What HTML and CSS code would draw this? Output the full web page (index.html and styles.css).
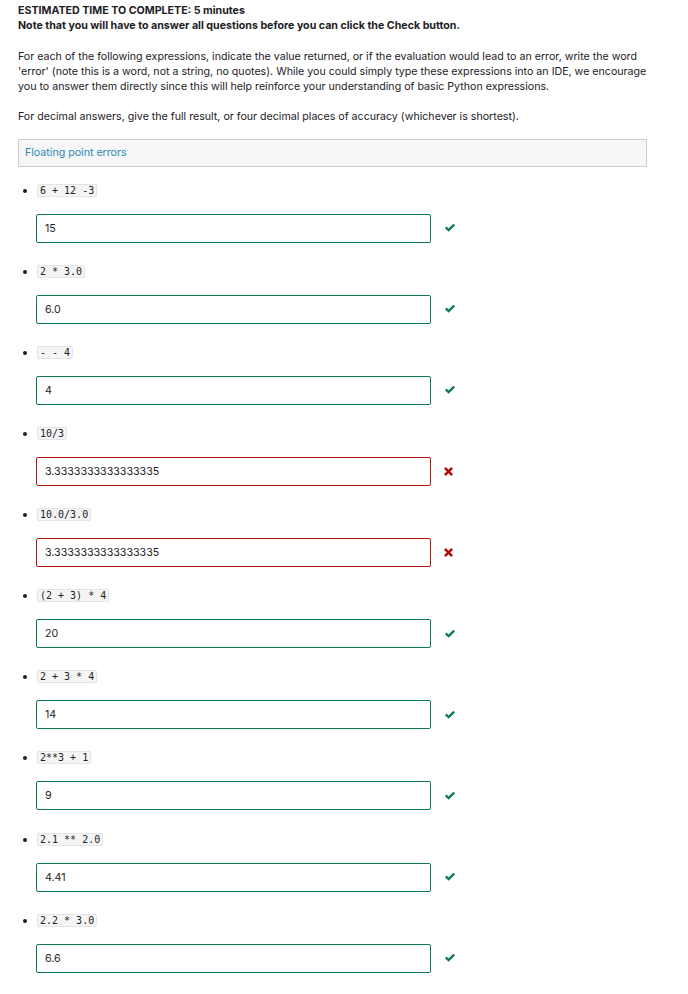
FILE: index.html
```html
<!DOCTYPE html>
<html>
<head>
<meta charset="utf-8">
<link rel="stylesheet" href="styles.css">
</head>
<body>
<div class="page">
  <p class="intro"><strong>ESTIMATED TIME TO COMPLETE: 5 minutes</strong><br><strong>Note that you will have to answer all questions before you can click the Check button.</strong></p>
  <p class="para">For each of the following expressions, indicate the value returned, or if the evaluation would lead to an error, write the word 'error' (note this is a word, not a string, no quotes). While you could simply type these expressions into an IDE, we encourage you to answer them directly since this will help reinforce your understanding of basic Python expressions.</p>
  <p class="para">For decimal answers, give the full result, or four decimal places of accuracy (whichever is shortest).</p>
  <div class="note">Floating point errors</div>
  <ul class="questions">
    <li><code>6 + 12 -3</code><div class="answer"><div class="field ok">15</div><svg class="mark check" viewBox="0 0 12 10"><path d="M1 5.2 L2.6 3.6 L4.6 5.6 L9.4 0.8 L11 2.4 L4.6 8.8 Z"/></svg></div></li>
    <li><code>2 * 3.0</code><div class="answer"><div class="field ok">6.0</div><svg class="mark check" viewBox="0 0 12 10"><path d="M1 5.2 L2.6 3.6 L4.6 5.6 L9.4 0.8 L11 2.4 L4.6 8.8 Z"/></svg></div></li>
    <li><code>- - 4</code><div class="answer"><div class="field ok">4</div><svg class="mark check" viewBox="0 0 12 10"><path d="M1 5.2 L2.6 3.6 L4.6 5.6 L9.4 0.8 L11 2.4 L4.6 8.8 Z"/></svg></div></li>
    <li><code>10/3</code><div class="answer"><div class="field bad">3.3333333333333335</div><svg class="mark cross" viewBox="0 0 10 10"><path d="M2 0 L5 3 L8 0 L10 2 L7 5 L10 8 L8 10 L5 7 L2 10 L0 8 L3 5 L0 2 Z"/></svg></div></li>
    <li><code>10.0/3.0</code><div class="answer"><div class="field bad">3.3333333333333335</div><svg class="mark cross" viewBox="0 0 10 10"><path d="M2 0 L5 3 L8 0 L10 2 L7 5 L10 8 L8 10 L5 7 L2 10 L0 8 L3 5 L0 2 Z"/></svg></div></li>
    <li><code>(2 + 3) * 4</code><div class="answer"><div class="field ok">20</div><svg class="mark check" viewBox="0 0 12 10"><path d="M1 5.2 L2.6 3.6 L4.6 5.6 L9.4 0.8 L11 2.4 L4.6 8.8 Z"/></svg></div></li>
    <li><code>2 + 3 * 4</code><div class="answer"><div class="field ok">14</div><svg class="mark check" viewBox="0 0 12 10"><path d="M1 5.2 L2.6 3.6 L4.6 5.6 L9.4 0.8 L11 2.4 L4.6 8.8 Z"/></svg></div></li>
    <li><code>2**3 + 1</code><div class="answer"><div class="field ok">9</div><svg class="mark check" viewBox="0 0 12 10"><path d="M1 5.2 L2.6 3.6 L4.6 5.6 L9.4 0.8 L11 2.4 L4.6 8.8 Z"/></svg></div></li>
    <li><code>2.1 ** 2.0</code><div class="answer"><div class="field ok">4.41</div><svg class="mark check" viewBox="0 0 12 10"><path d="M1 5.2 L2.6 3.6 L4.6 5.6 L9.4 0.8 L11 2.4 L4.6 8.8 Z"/></svg></div></li>
    <li><code>2.2 * 3.0</code><div class="answer"><div class="field ok">6.6</div><svg class="mark check" viewBox="0 0 12 10"><path d="M1 5.2 L2.6 3.6 L4.6 5.6 L9.4 0.8 L11 2.4 L4.6 8.8 Z"/></svg></div></li>
  </ul>
</div>
</body>
</html>
```
FILE: styles.css
```css
html, body {
  margin: 0;
  padding: 0;
  background: #ffffff;
}
body {
  font-family: Inter, "Liberation Sans", sans-serif;
  font-size: 10.65px;
  line-height: 15px;
  color: #1d2125;
}
.page {
  padding: 2.5px 41px 0 18px;
}
p {
  margin: 0;
}
.intro strong {
  font-weight: 700;
}
.para {
  margin-top: 16px;
}
.para + .para {
  margin-top: 15px;
}
.note {
  margin-top: 15.5px;
  height: 26px;
  line-height: 26px;
  background: #f6f6f6;
  border: 1px solid #cccccc;
  padding: 0 6px;
  color: #2a8ab5;
}
.questions {
  list-style: disc;
  margin: 15.5px 0 0 0;
  padding: 0 0 0 19px;
}
.questions li {
  margin-bottom: 21.15px;
}
.questions li::marker {
  font-size: 11px;
}
code {
  font-family: "DejaVu Sans Mono", "Liberation Mono", monospace;
  font-size: 10px;
  line-height: 11px;
  background: #f5f5f5;
  border: 1px solid #e4e4e4;
  border-radius: 2px;
  padding: 0 2px;
  color: #1d2125;
}
.answer {
  display: flex;
  align-items: center;
  gap: 13px;
  margin-top: 16px;
  margin-left: -1px;
}
.field {
  box-sizing: border-box;
  width: 395px;
  height: 29px;
  line-height: 27px;
  padding: 0 8px;
  border: 1px solid;
  border-radius: 2px;
  background: #ffffff;
}
.field.ok {
  border-color: #0f7b49;
}
.field.bad {
  border-color: #b3140f;
}
.mark {
  display: block;
}
.check {
  width: 12px;
  height: 10px;
  fill: #0c7a53;
}
.cross {
  width: 9px;
  height: 9px;
  fill: #b40a0a;
}
```
